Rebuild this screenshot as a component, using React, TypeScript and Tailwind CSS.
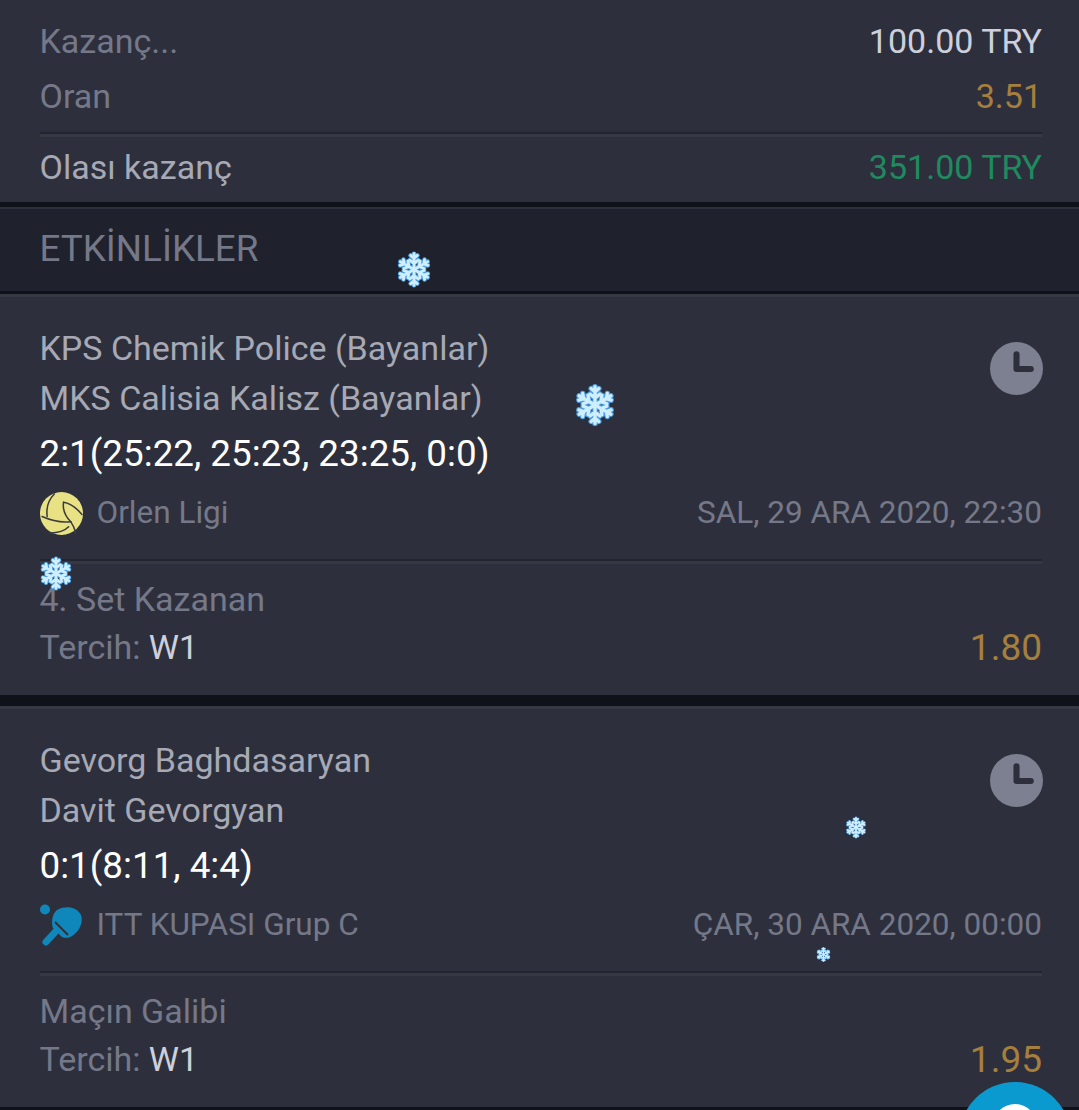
const Divider = () => (
  <div className="h-[5px] border-t-2 border-[#22252f] bg-[#363944]" />
);

function Snowflake({ className }: { className: string }) {
  const arm = "M12 12V1.5M12 4.5 9.8 2.6M12 4.5l2.2-1.9M12 8 9.2 5.8M12 8l2.8-2.2";
  const angles = [0, 60, 120, 180, 240, 300];
  return (
    <svg viewBox="0 0 24 24" className={`absolute ${className}`} fill="none" strokeLinecap="round">
      {angles.map((a) => (
        <path key={a} d={arm} transform={`rotate(${a} 12 12)`} stroke="#4a9fe4" strokeWidth="3.1" />
      ))}
      {angles.map((a) => (
        <path key={a} d={arm} transform={`rotate(${a} 12 12)`} stroke="#cfeeff" strokeWidth="1.9" />
      ))}
    </svg>
  );
}

function ClockIcon() {
  return (
    <svg viewBox="0 0 52 52" className="w-[53px] h-[53px]">
      <circle cx="26" cy="26" r="26" fill="#7d8090" />
      <path d="M26 12v14.5h14" fill="none" stroke="#2d303c" strokeWidth="6" strokeLinecap="round" strokeLinejoin="round" />
    </svg>
  );
}

function VolleyIcon() {
  return (
    <svg viewBox="0 0 42 42" className="w-[43px] h-[43px]">
      <circle cx="21" cy="21" r="21" fill="#e8e285" />
      <g fill="none" stroke="#3b3d3f" strokeWidth="1.5" strokeLinecap="round">
        <path d="M14 2C8 8 6 16 7 24" />
        <path d="M23 10c7 1 13 6 18 12" />
        <path d="M23 10c-1 7 2 14 7 19" />
        <path d="M2 24c9 4 19 6 28 5" />
        <path d="M30 29c2 3 4 7 5 11" />
        <path d="M10 40c7 0 14-2 18-6" />
      </g>
    </svg>
  );
}

function PaddleIcon() {
  return (
    <svg viewBox="0 0 43 43" className="w-[43px] h-[43px]">
      <circle cx="5" cy="5.5" r="5" fill="#0f87bb" />
      <path d="M18 5.5C26 1 37 3 41 11c3 8-3 19-12 22.5-2 .5-5 .5-7-.5l-9-9c-2-5-1-15 5-18.5z" fill="#0f87bb" />
      <path d="M17 26 6 38" stroke="#0f87bb" strokeWidth="7" strokeLinecap="round" />
      <path d="M15 18 28 31" stroke="#2d303c" strokeWidth="2" />
    </svg>
  );
}

type Match = {
  home: string;
  away: string;
  score: string;
  league: string;
  date: string;
  market: string;
  odd: string;
  icon: React.ReactNode;
};

function MatchCard({ m }: { m: Match }) {
  return (
    <div className="bg-[#2d303c] pl-[39.5px] pr-[37px] border-t-[3px] border-[#363944] h-[401px]">
      <div className="flex items-start justify-between pt-[26px] text-[34px]">
        <div>
          <div className="h-[50px] leading-[50px] text-[#a7a9b5]">{m.home}</div>
          <div className="h-[50px] leading-[50px] text-[#a7a9b5]">{m.away}</div>
          <div className="h-[60px] leading-[62px] text-white text-[36.8px]">{m.score}</div>
        </div>
        <div className="mt-[19px] -mr-px">
          <ClockIcon />
        </div>
      </div>
      <div className="flex items-center justify-between h-[60px] text-[#757888] text-[31.5px]">
        <div className="flex items-center gap-[14px]">
          {m.icon}
          <span>{m.league}</span>
        </div>
        <span>{m.date}</span>
      </div>
      <div className="mt-[16px]">
        <Divider />
      </div>
      <div className="h-[63px] pt-[15px] leading-[40px] text-[#757888] text-[34px]">{m.market}</div>
      <div className="flex items-center justify-between h-[40px] text-[#757888] text-[34px]">
        <span>
          Tercih: <span className="text-[#cdd0dc]">W1</span>
        </span>
        <span className="text-[#a67e3d] text-[37px] pt-[2px]">{m.odd}</span>
      </div>
    </div>
  );
}

const matches: Match[] = [
  {
    home: "KPS Chemik Police (Bayanlar)",
    away: "MKS Calisia Kalisz (Bayanlar)",
    score: "2:1(25:22, 25:23, 23:25, 0:0)",
    league: "Orlen Ligi",
    date: "SAL, 29 ARA 2020, 22:30",
    market: "4. Set Kazanan",
    odd: "1.80",
    icon: <VolleyIcon />,
  },
  {
    home: "Gevorg Baghdasaryan",
    away: "Davit Gevorgyan",
    score: "0:1(8:11, 4:4)",
    league: "ITT KUPASI Grup C",
    date: "ÇAR, 30 ARA 2020, 00:00",
    market: "Maçın Galibi",
    odd: "1.95",
    icon: <PaddleIcon />,
  },
];

export default function App() {
  return (
    <div className="relative h-[1110px] overflow-hidden bg-[#0f1219] font-['Roboto',sans-serif] text-[34px]">
      <div className="bg-[#2d303c] pl-[39.5px] pr-[37px] h-[202px]">
        <div className="flex items-center justify-between pt-[14px] h-[69px] text-[#757888]">
          <span>Kazanç...</span>
          <span className="text-[#cdd0dc]">100.00 TRY</span>
        </div>
        <div className="flex items-center justify-between h-[55px] text-[#757888]">
          <span>Oran</span>
          <span className="text-[#a67e3d]">3.51</span>
        </div>
        <div className="mt-[8px]">
          <Divider />
        </div>
        <div className="flex items-center justify-between h-[60px] text-[#a7a9b5]">
          <span>Olası kazanç</span>
          <span className="text-[#1f8a5f]">351.00 TRY</span>
        </div>
      </div>
      <div className="mt-[5px] border-t-[2px] border-[#2d303c] bg-[#1f222d] h-[84px] pl-[39.5px] pb-[3px] flex items-center text-[#757888] text-[36.8px]">
        ETKİNLİKLER
      </div>
      <div className="mt-[3px]">
        <MatchCard m={matches[0]} />
      </div>
      <div className="mt-[11px]">
        <MatchCard m={matches[1]} />
      </div>

      <Snowflake className="left-[396px] top-[251px] w-[36px] h-[37px]" />
      <Snowflake className="left-[574px] top-[383px] w-[42px] h-[44px]" />
      <Snowflake className="left-[39px] top-[556px] w-[34px] h-[35px]" />
      <Snowflake className="left-[845px] top-[816px] w-[22px] h-[23px]" />
      <Snowflake className="left-[816px] top-[947px] w-[15px] h-[15px]" />

      <div className="absolute left-[959px] top-[1082px] w-[112px] h-[112px] rounded-full bg-[#0b9ad0]">
        <div className="absolute left-[34px] top-[22px] w-[44px] h-[44px] rounded-full bg-white" />
      </div>
    </div>
  );
}
